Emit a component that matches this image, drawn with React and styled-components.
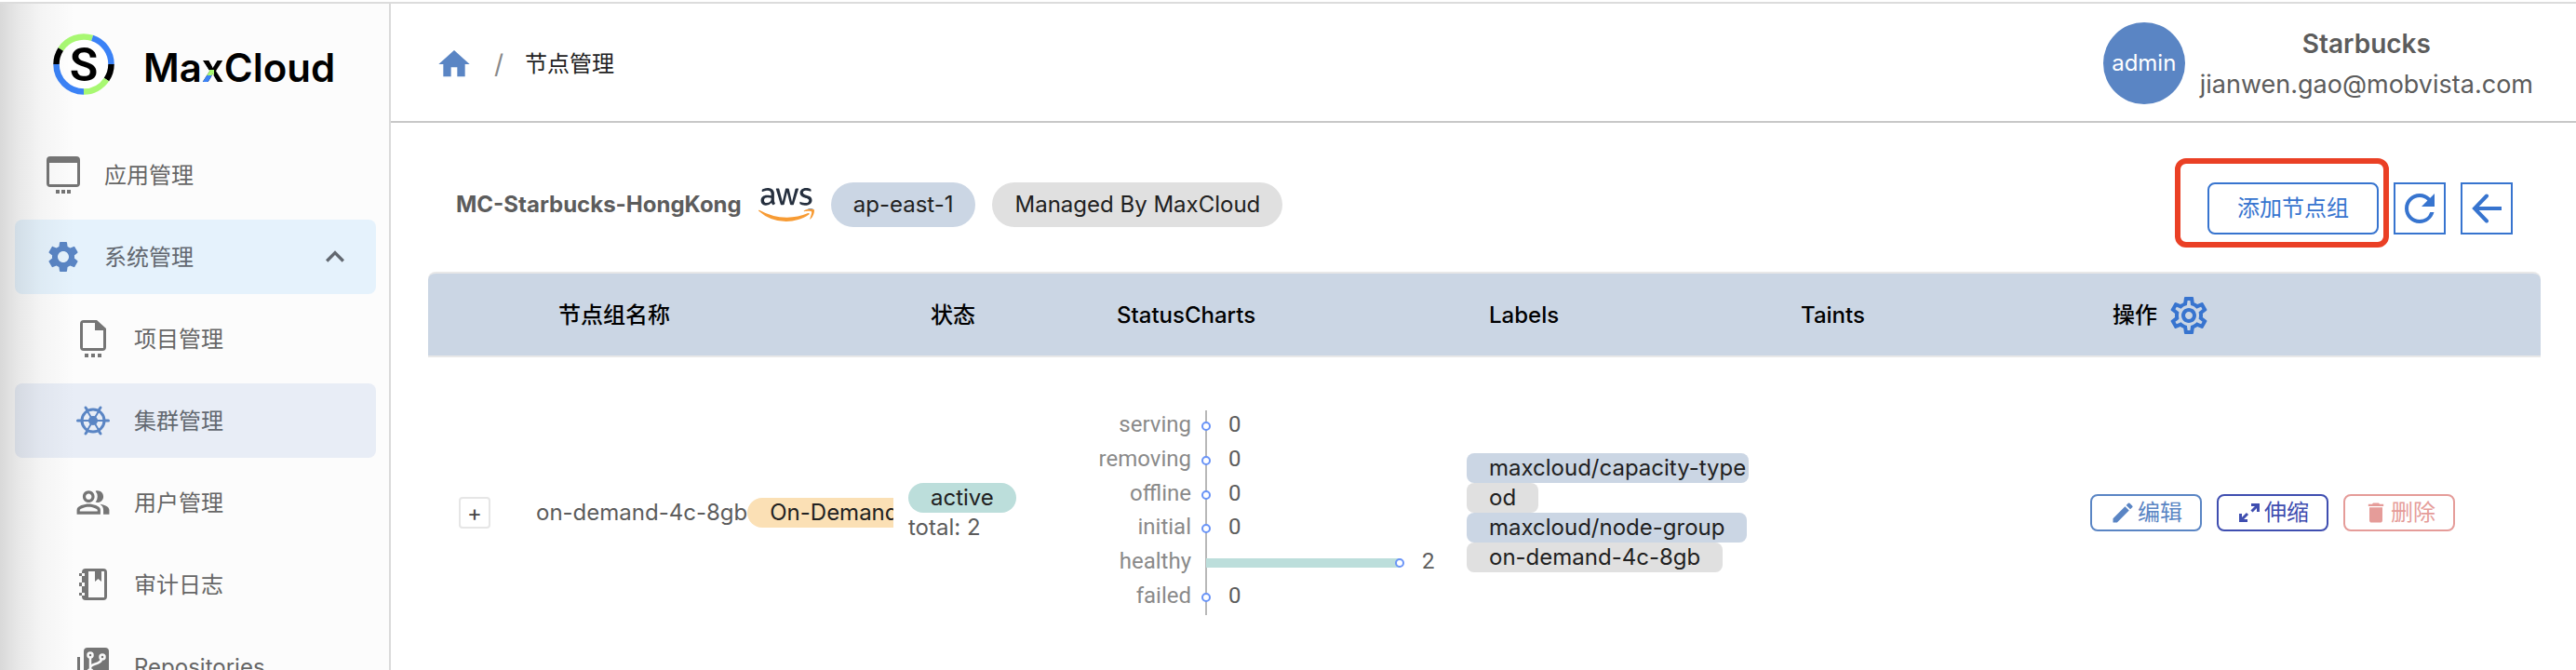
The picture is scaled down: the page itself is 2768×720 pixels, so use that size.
import React from 'react';
import styled, { createGlobalStyle } from 'styled-components';
import {
  MdHome,
  MdSettings,
  MdOutlineSettings,
  MdOutlinePeopleAlt,
  MdExpandLess,
  MdRefresh,
  MdEdit,
  MdDelete,
} from 'react-icons/md';
import { FaAws } from 'react-icons/fa';

const GlobalStyle = createGlobalStyle`
  *, *::before, *::after { box-sizing: border-box; }
  body {
    margin: 0;
    background: #fff;
    color: #5c5c5c;
    font: 24px/32px Inter, 'Noto Sans CJK SC', sans-serif;
  }
  button { font: inherit; cursor: pointer; }
`;

/* ---------- shell ---------- */

const Shell = styled.div`
  display: flex;
  height: calc(100vh - 2px);
  overflow: hidden;
  margin-top: 2px;
  border-top: 2px solid #dcdcdc;
`;

const Sidebar = styled.aside`
  position: relative;
  flex: 0 0 420px;
  border-right: 2px solid #dadada;
  background: #fcfcfc;

  &::before {
    content: '';
    position: absolute;
    inset: 0 auto 0 0;
    width: 80px;
    background: linear-gradient(
      to right,
      rgba(0, 0, 0, 0.14),
      rgba(0, 0, 0, 0.08) 25%,
      rgba(0, 0, 0, 0.03) 55%,
      rgba(0, 0, 0, 0)
    );
    pointer-events: none;
    z-index: 1;
  }
`;

const Brand = styled.div`
  display: flex;
  align-items: center;
  gap: 30px;
  height: 144px;
  padding: 0 0 14px 56px;
`;

const BrandMark = styled.svg`
  width: 68px;
  height: 68px;
`;

const BrandName = styled.span`
  margin-top: 8px;
  color: #000;
  font: 600 42px/48px Inter, sans-serif;
`;

const BrandX = styled.span`
  color: transparent;
  background:
    linear-gradient(#000 54%, #a8f872 54% 67%, #3b82f6 67%) left / 56% 100% no-repeat,
    linear-gradient(#000, #000);
  -webkit-background-clip: text;
  background-clip: text;
`;

const Nav = styled.nav`
  display: flex;
  flex-direction: column;
  gap: 8px;
  padding: 0 14px 0 16px;
`;

const NavLink = styled.a`
  display: flex;
  align-items: center;
  gap: 20px;
  height: 80px;
  padding: 0 24px 0 ${(p) => (p.$nested ? '60px' : '28px')};
  border-radius: 8px;
  background: ${(p) => p.$fill || 'transparent'};
  color: ${(p) => (p.$fill ? '#626870' : '#666')};
  text-decoration: none;
`;

const NavIcon = styled.span`
  display: flex;
  flex: 0 0 48px;
  align-items: center;
  justify-content: center;
  color: ${(p) => (p.$active ? '#5a85c4' : '#757575')};
`;

const NavText = styled.span`
  flex: 1;
  padding-top: 2px;
`;

const Main = styled.main`
  flex: 1;
  min-width: 0;
`;

/* ---------- top bar ---------- */

const TopBar = styled.header`
  display: flex;
  align-items: center;
  justify-content: space-between;
  height: 128px;
  padding: 2px 46px 0 48px;
  border-bottom: 2px solid #c8c8c8;
`;

const Breadcrumb = styled.nav`
  display: flex;
  align-items: center;
  gap: 23px;
  padding-top: 2px;
  color: #222;
`;

const HomeLink = styled.a`
  display: flex;
  color: #5a85c4;
`;

const Slash = styled.span`
  color: #8a8a8a;
  font-size: 28px;
`;

const User = styled.div`
  display: flex;
  align-items: center;
  gap: 16px;
`;

const Avatar = styled.div`
  display: grid;
  place-items: center;
  width: 88px;
  height: 88px;
  border-radius: 50%;
  background: #5a85c4;
  color: #fff;
`;

const UserText = styled.div`
  padding-top: 2px;
  text-align: center;
  font-size: 27px;
  line-height: 44px;
`;

const UserName = styled.div`
  font-size: 28px;
  font-weight: 600;
`;

/* ---------- cluster toolbar ---------- */

const Content = styled.div`
  padding: 64px 38px 0 40px;
`;

const Toolbar = styled.div`
  display: flex;
  align-items: flex-start;
  justify-content: space-between;
  padding: 0 30px 40px 30px;
`;

const ClusterInfo = styled.div`
  display: flex;
  align-items: center;
  gap: 18px;
  height: 48px;
`;

const ClusterName = styled.h1`
  margin: 0;
  font-size: 24px;
  font-weight: 700;
`;

const AwsLogo = styled(FaAws)`
  width: 60px;
  height: 48px;

  path { fill: url(#aws-colors); }
`;

const tones = {
  blue: '#cbd6e4',
  gray: '#e0e0e0',
  green: '#bcdedb',
  orange: '#fbe0b5',
};

const Chip = styled.span`
  display: inline-block;
  flex: none;
  max-width: 100%;
  padding: 0 24px;
  border-radius: ${(p) => (p.$square ? '8px' : '24px')};
  background: ${(p) => tones[p.$tone]};
  color: #212121;
  line-height: ${(p) => (p.$large ? '48px' : '32px')};
  white-space: nowrap;
`;

const Actions = styled.div`
  display: flex;
  gap: 16px;
`;

const Highlight = styled.div`
  position: relative;

  &::after {
    content: '';
    position: absolute;
    inset: -26px -11px -14px -35px;
    border: 6px solid #ea4025;
    border-radius: 12px;
    pointer-events: none;
  }
`;

const AddButton = styled.button`
  height: 56px;
  padding: 0 30px;
  border: 2px solid #3774cf;
  border-radius: 8px;
  background: #fff;
  color: #3774cf;
`;

const SquareButton = styled.button`
  display: grid;
  place-items: center;
  width: 56px;
  height: 56px;
  padding: 0;
  border: 2px solid #3774cf;
  background: #fff;
  color: #3774cf;
`;

/* ---------- node group table ---------- */

const Table = styled.table`
  width: 100%;
  table-layout: fixed;
  border-collapse: separate;
  border-spacing: 0;
`;

const HeadCell = styled.th`
  height: 92px;
  padding: 2px 0 0 40px;
  border: solid #e8e8e8;
  border-width: 2px 0;
  background: #cbd6e4;
  color: #000;
  font-weight: 500;
  text-align: left;

  &:first-child { border-top-left-radius: 8px; }
  &:last-child { border-top-right-radius: 8px; }
`;

const HeadTools = styled.span`
  display: flex;
  align-items: center;
  gap: 10px;
`;

const PlainButton = styled.button`
  display: flex;
  padding: 0;
  border: 0;
  background: none;
  color: #3774cf;
`;

const Cell = styled.td`
  height: 334px;
  padding: 0 ${(p) => (p.$clip ? '0' : '16px')} 0 16px;
  overflow: hidden;
  vertical-align: middle;
`;

const ExpandButton = styled.button`
  display: grid;
  place-items: center;
  width: 34px;
  height: 34px;
  margin-left: 17px;
  padding: 0;
  border: 2px solid #e6e6e6;
  border-radius: 4px;
  background: #fff;
  color: #444;
`;

const NameLine = styled.div`
  display: flex;
  align-items: center;
  white-space: nowrap;
`;

const Stack = styled.div`
  display: flex;
  flex-direction: column;
  align-items: flex-start;
`;

const Chart = styled.svg`
  display: block;
  width: 368px;
  height: 220px;
  overflow: visible;
  font-family: Roboto, sans-serif;
  font-size: 24px;
`;

const RowActions = styled.div`
  display: flex;
  gap: 16px;
`;

const RowButton = styled.button`
  display: flex;
  align-items: center;
  justify-content: center;
  gap: 2px;
  width: 120px;
  height: 40px;
  padding: 0;
  border: 2px solid;
  border-radius: 8px;
  background: #fff;
  color: ${(p) => p.$color};
`;

/* ---------- drawings ---------- */

const AppIcon = () => (
  <svg width="36" height="40" viewBox="0 0 36 40" fill="currentColor">
    <path fillRule="evenodd" d="M4 0h28a4 4 0 0 1 4 4v25a4 4 0 0 1-4 4H4a4 4 0 0 1-4-4V4a4 4 0 0 1 4-4zM3 7v23h30V7z" />
    <path d="M10 36h4v4h-4zM16 36h4v4h-4zM22 36h4v4h-4z" />
  </svg>
);

const FileIcon = () => (
  <svg width="28" height="40" viewBox="0 0 28 40" fill="currentColor">
    <path fillRule="evenodd" d="M4 0h14l10 9v20a4 4 0 0 1-4 4H4a4 4 0 0 1-4-4V4a4 4 0 0 1 4-4zM3 3v27h22V11h-9V3z" />
    <path d="M5 36h4v4H5zM12 36h4v4h-4zM19 36h4v4h-4z" />
  </svg>
);

const HelmIcon = () => (
  <svg width="36" height="36" viewBox="0 0 36 36" fill="none" stroke="currentColor" strokeLinecap="round">
    <circle cx="18" cy="18" r="12" strokeWidth="3" />
    <circle cx="18" cy="18" r="5" fill="currentColor" stroke="none" />
    <path strokeWidth="2" d="M6 18h24M12 8l12 20M24 8L12 28" />
    <path strokeWidth="3" d="M1.500 18H5M31 18h3.500M10 4l2 3M26 4l-2 3M10 32l2-3M26 32l-2-3" />
  </svg>
);

const NotebookIcon = () => (
  <svg width="30" height="34" viewBox="0 0 30 34" fill="currentColor">
    <path fillRule="evenodd" d="M7 0h19a4 4 0 0 1 4 4v26a4 4 0 0 1-4 4H7a4 4 0 0 1-4-4v-1h3v-3H3v-7h3v-4H3V8h3V5H3V4a4 4 0 0 1 4-4zM10 3v28h17V3h-3v11l-3.500-3-3.500 3V3z" />
    <path d="M0 5h3v3H0zM0 15h3v4H0zM0 26h3v3H0z" />
  </svg>
);

const RepoIcon = () => (
  <svg width="34" height="40" viewBox="0 0 34 40">
    <path fill="currentColor" d="M11 0h19a4 4 0 0 1 4 4v25H11a4 4 0 0 1-4-4V4a4 4 0 0 1 4-4z" />
    <path fill="currentColor" d="M0 10h3v26h25v4H4a4 4 0 0 1-4-4z" />
    <g fill="none" stroke="#fafafa" strokeWidth="2.500">
      <circle cx="14" cy="8" r="2.500" />
      <circle cx="27" cy="10" r="2.500" />
      <circle cx="14" cy="26" r="2.500" />
      <path d="M14 11v12M26 13c-2 6-12 3-12 9" />
    </g>
  </svg>
);

const BackIcon = () => (
  <svg width="32" height="32" viewBox="0 0 32 32" fill="none" stroke="currentColor" strokeWidth="4">
    <path strokeLinecap="round" d="M16 2.500L3 16l13 13.500" />
    <path d="M3 16h29" />
  </svg>
);

const ScaleIcon = () => (
  <svg width="28" height="28" viewBox="0 0 28 28" fill="none" stroke="currentColor" strokeWidth="3">
    <path d="M16 5.500h7.500V13M23 6l-6.500 6.500M4.500 15v7.500H12M5 22l7-7" />
  </svg>
);

const ringParts = [
  [303, 75, '#a8f872'],
  [18, 72, '#3b82f6'],
  [90, 34, '#000'],
  [124, 56, '#a8f872'],
  [180, 90, '#3b82f6'],
  [270, 33, '#000'],
];

const Logo = () => (
  <BrandMark viewBox="0 0 68 68" aria-hidden="true">
    <circle cx="34" cy="34" r="29" fill="#fff" />
    {ringParts.map(([start, size, color]) => (
      <circle
        key={start}
        cx="34"
        cy="34"
        r="29.500"
        fill="none"
        stroke={color}
        strokeWidth="6.500"
        pathLength="360"
        strokeDasharray={`${size} ${360 - size}`}
        transform={`rotate(${start - 90} 34 34)`}
      />
    ))}
    <text x="34" y="52" textAnchor="middle" fontFamily="Roboto, sans-serif" fontWeight="600" fontSize="50">S</text>
  </BrandMark>
);

const statuses = [
  ['serving', 0],
  ['removing', 0],
  ['offline', 0],
  ['initial', 0],
  ['healthy', 2],
  ['failed', 0],
];

const StatusChart = () => {
  const axis = 120;
  const unit = 104;
  return (
    <Chart viewBox="0 0 368 220" role="img" aria-label="StatusCharts">
      <rect x={axis - 1} y="0" width="2" height="220" fill="#b8b8b8" />
      {statuses.map(([name, value], i) => {
        const y = Math.round((i + 0.5) * (220 / 6)) - 1;
        const end = axis + value * unit;
        return (
          <g key={name}>
            <text x={axis - 16} y={y + 6} textAnchor="end" fill="#8a8a8a">{name}</text>
            <rect x={axis} y={y - 5} width={value * unit} height="10" fill="#bcdedb" />
            <circle cx={end} cy={y} r="4" fill="#fff" stroke="#6a94f7" strokeWidth="2" />
            <text x={end + 24} y={y + 6} fill="#5c5c5c">{value}</text>
          </g>
        );
      })}
    </Chart>
  );
};

/* ---------- page ---------- */

const navItems = [
  { text: '应用管理', icon: <AppIcon /> },
  { text: '系统管理', icon: <MdSettings size={40} />, fill: '#e5f2fc', open: true },
  { text: '项目管理', icon: <FileIcon />, nested: true },
  { text: '集群管理', icon: <HelmIcon />, nested: true, fill: '#e8edf6' },
  { text: '用户管理', icon: <MdOutlinePeopleAlt size={38} />, nested: true },
  { text: '审计日志', icon: <NotebookIcon />, nested: true },
  { text: 'Repositories', icon: <RepoIcon />, nested: true },
];

const labels = [
  ['maxcloud/capacity-type', 'blue'],
  ['od', 'gray'],
  ['maxcloud/node-group', 'blue'],
  ['on-demand-4c-8gb', 'gray'],
];

export default function App() {
  return (
    <>
      <GlobalStyle />
      <svg width="0" height="0" style={{ position: 'absolute' }} aria-hidden="true">
        <linearGradient id="aws-colors" x1="0" y1="0" x2="0" y2="1">
          <stop offset="0.64" stopColor="#252f3e" />
          <stop offset="0.64" stopColor="#f79b34" />
        </linearGradient>
      </svg>
      <Shell>
        <Sidebar>
          <Brand>
            <Logo />
            <BrandName>Ma<BrandX>x</BrandX>Cloud</BrandName>
          </Brand>
          <Nav>
            {navItems.map((item) => (
              <NavLink key={item.text} href="#" $nested={item.nested} $fill={item.fill}>
                <NavIcon $active={Boolean(item.fill)}>{item.icon}</NavIcon>
                <NavText>{item.text}</NavText>
                {item.open && <MdExpandLess size={40} />}
              </NavLink>
            ))}
          </Nav>
        </Sidebar>
        <Main>
          <TopBar>
            <Breadcrumb>
              <HomeLink href="#" aria-label="Home"><MdHome size={40} /></HomeLink>
              <Slash>/</Slash>
              <span>节点管理</span>
            </Breadcrumb>
            <User>
              <Avatar>admin</Avatar>
              <UserText>
                <UserName>Starbucks</UserName>
                <div>jianwen.gao@mobvista.com</div>
              </UserText>
            </User>
          </TopBar>
          <Content>
            <Toolbar>
              <ClusterInfo>
                <ClusterName>MC-Starbucks-HongKong</ClusterName>
                <AwsLogo />
                <Chip $large $tone="blue">ap-east-1</Chip>
                <Chip $large $tone="gray">Managed By MaxCloud</Chip>
              </ClusterInfo>
              <Actions>
                <Highlight><AddButton>添加节点组</AddButton></Highlight>
                <SquareButton aria-label="Refresh"><MdRefresh size={48} /></SquareButton>
                <SquareButton aria-label="Back"><BackIcon /></SquareButton>
              </Actions>
            </Toolbar>
            <Table>
              <colgroup>
                <col width="100" />
                <col width="400" />
                <col width="200" />
                <col width="400" />
                <col width="335" />
                <col width="335" />
                <col />
              </colgroup>
              <thead>
                <tr>
                  <HeadCell />
                  <HeadCell>节点组名称</HeadCell>
                  <HeadCell>状态</HeadCell>
                  <HeadCell>StatusCharts</HeadCell>
                  <HeadCell>Labels</HeadCell>
                  <HeadCell>Taints</HeadCell>
                  <HeadCell>
                    <HeadTools>
                      操作
                      <PlainButton aria-label="Columns"><MdOutlineSettings size={48} /></PlainButton>
                    </HeadTools>
                  </HeadCell>
                </tr>
              </thead>
              <tbody>
                <tr>
                  <Cell><ExpandButton aria-label="Expand">+</ExpandButton></Cell>
                  <Cell $clip>
                    <NameLine>
                      on-demand-4c-8gb
                      <Chip $tone="orange">On-Demand</Chip>
                    </NameLine>
                  </Cell>
                  <Cell>
                    <Stack>
                      <Chip $tone="green">active</Chip>
                      <span>total: 2</span>
                    </Stack>
                  </Cell>
                  <Cell><StatusChart /></Cell>
                  <Cell>
                    <Stack>
                      {labels.map(([text, tone]) => (
                        <Chip key={text} $square $tone={tone}>{text}</Chip>
                      ))}
                    </Stack>
                  </Cell>
                  <Cell />
                  <Cell>
                    <RowActions>
                      <RowButton $color="#5a85c4"><MdEdit size={28} />编辑</RowButton>
                      <RowButton $color="#3f4eb0"><ScaleIcon />伸缩</RowButton>
                      <RowButton $color="#e59c99"><MdDelete size={28} />删除</RowButton>
                    </RowActions>
                  </Cell>
                </tr>
              </tbody>
            </Table>
          </Content>
        </Main>
      </Shell>
    </>
  );
}
